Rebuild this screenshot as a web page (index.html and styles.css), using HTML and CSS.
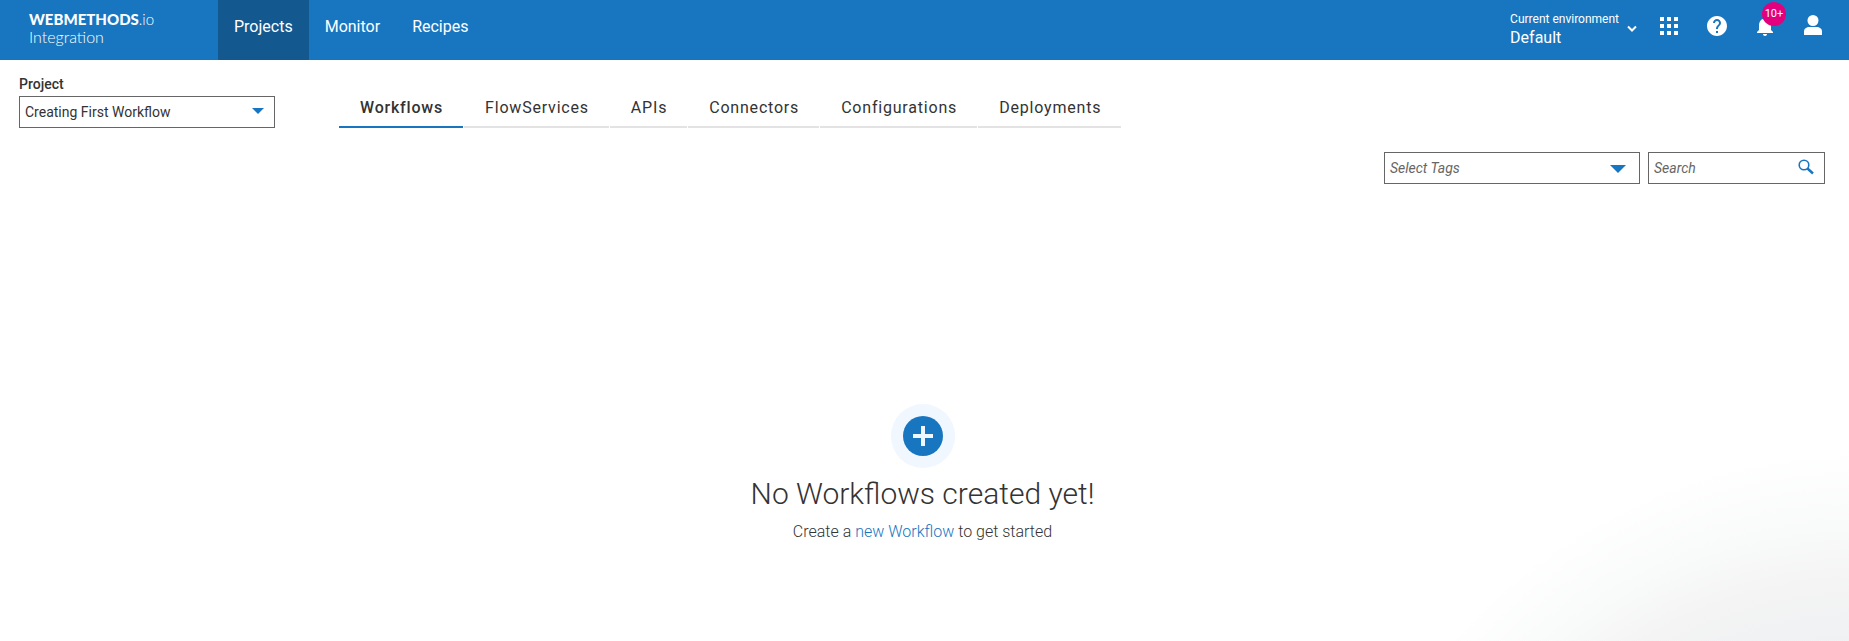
FILE: index.html
```html
<!DOCTYPE html>
<html lang="en">
<head>
<meta charset="utf-8">
<title>webMethods.io Integration</title>
<link rel="stylesheet" href="styles.css">
</head>
<body>
<header class="topbar">
  <a class="brand" href="#">
    <span class="brand-name"><b>WEBMETHODS</b>.io</span>
    <span class="brand-product">Integration</span>
  </a>
  <nav class="main-nav">
    <a class="nav-link active" href="#">Projects</a>
    <a class="nav-link" href="#">Monitor</a>
    <a class="nav-link" href="#">Recipes</a>
  </nav>
  <div class="tools">
    <button class="environment" type="button">
      <span class="env-text">
        <span class="env-label">Current environment</span>
        <span class="env-value">Default</span>
      </span>
      <svg class="chevron" viewBox="0 0 10 8" aria-hidden="true"><path d="M1 1.5 5 5.5 9 1.5" fill="none" stroke="currentColor" stroke-width="2"/></svg>
    </button>
    <button class="icon-button" type="button" aria-label="App switcher">
      <svg viewBox="0 0 24 24" aria-hidden="true"><path d="M3 3h4v4H3zM10 3h4v4h-4zM17 3h4v4h-4zM3 10h4v4H3zM10 10h4v4h-4zM17 10h4v4h-4zM3 17h4v4H3zM10 17h4v4h-4zM17 17h4v4h-4z"/></svg>
    </button>
    <button class="icon-button" type="button" aria-label="Help">
      <svg viewBox="0 0 24 24" aria-hidden="true"><path d="M12 2C6.480 2 2 6.480 2 12s4.480 10 10 10 10-4.480 10-10S17.520 2 12 2zm1 17h-2v-2h2v2zm2.070-7.750-.9.920C13.450 12.900 13 13.500 13 15h-2v-.5c0-1.100.45-2.100 1.170-2.830l1.240-1.260c.37-.36.590-.86.590-1.410 0-1.100-.9-2-2-2s-2 .9-2 2H8c0-2.210 1.790-4 4-4s4 1.790 4 4c0 .88-.36 1.680-.93 2.250z"/></svg>
    </button>
    <button class="icon-button" type="button" aria-label="Notifications">
      <svg viewBox="0 0 24 24" aria-hidden="true"><path d="M12 22c1.100 0 2-.9 2-2h-4c0 1.100.89 2 2 2zm6-6v-5c0-3.070-1.640-5.640-4.500-6.320V4c0-.83-.67-1.500-1.500-1.500s-1.500.67-1.500 1.500v.68C7.630 5.360 6 7.920 6 11v5l-2 2v1h16v-1l-2-2z"/></svg>
      <span class="badge">10+</span>
    </button>
    <button class="icon-button" type="button" aria-label="Account">
      <svg viewBox="0 0 24 24" aria-hidden="true"><circle cx="12" cy="6.500" r="5.500"/><path d="M3 21v-3.500C3 14.500 5.500 13 8.500 13h7c3 0 5.500 1.500 5.500 4.500V21z"/></svg>
    </button>
  </div>
</header>
<main class="page">
  <div class="project-row">
    <div class="project">
      <label class="project-label" for="project">Project</label>
      <div class="field">
        <select class="control" id="project"><option>Creating First Workflow</option></select>
        <svg class="arrow" viewBox="0 0 12 6" aria-hidden="true"><path d="M0 0h12L6 6z"/></svg>
      </div>
    </div>
    <nav class="tabs">
      <a class="tab selected" href="#">Workflows</a>
      <a class="tab" href="#">FlowServices</a>
      <a class="tab" href="#">APIs</a>
      <a class="tab" href="#">Connectors</a>
      <a class="tab" href="#">Configurations</a>
      <a class="tab" href="#">Deployments</a>
    </nav>
  </div>
  <div class="filters">
    <div class="field">
      <select class="control hint" aria-label="Tags"><option>Select Tags</option></select>
      <svg class="arrow large" viewBox="0 0 16 8" aria-hidden="true"><path d="M0 0h16L8 8z"/></svg>
    </div>
    <div class="field search">
      <input class="control hint" type="text" placeholder="Search" aria-label="Search">
      <svg class="magnifier" viewBox="0 0 16 16" aria-hidden="true"><circle cx="6" cy="6" r="4.800" fill="none" stroke="currentColor" stroke-width="1.600"/><path d="m9.500 9.500 5.500 5" stroke="currentColor" stroke-width="2.400"/></svg>
    </div>
  </div>
  <section class="empty">
    <button class="add" type="button" aria-label="New Workflow">
      <svg viewBox="0 0 40 40" aria-hidden="true"><circle cx="20" cy="20" r="20" fill="#1776bf"/><path d="M18 10h4v8h8v4h-8v8h-4v-8h-8v-4h8z" fill="#f0f7ff"/></svg>
    </button>
    <h1 class="empty-title">No Workflows created yet!</h1>
    <p class="empty-text">Create a <a href="#">new Workflow</a> to get started</p>
  </section>
</main>
</body>
</html>
```
FILE: styles.css
```css
* {
  box-sizing: border-box;
}

body {
  margin: 0;
  min-height: 100vh;
  display: flex;
  flex-direction: column;
  font-family: Roboto, "Liberation Sans", sans-serif;
  color: #333;
  background: radial-gradient(circle 540px at calc(100% + 10px) calc(100% + 350px), #ebeef3 0, #eff1f3 64%, #f4f4f4 76%, #f9fafa 86%, #fff 100%) #fff;
}

a {
  text-decoration: none;
}

button {
  padding: 0;
  border: 0;
  background: none;
  color: inherit;
  font: inherit;
  cursor: pointer;
}

svg {
  display: block;
}

.topbar {
  display: flex;
  height: 60px;
  padding: 0 24px 0 29px;
  background: #1776bf;
  color: #fff;
}

.brand {
  display: flex;
  flex-direction: column;
  width: 189px;
  padding-top: 11px;
  color: #fff;
  font-family: Lato, sans-serif;
  font-weight: 300;
  font-size: 15px;
  line-height: 17px;
}

.brand-name b {
  font-weight: 900;
}

.brand-product {
  font-size: 16px;
  line-height: 18px;
}

.main-nav {
  display: flex;
}

.nav-link {
  padding: 17px 16px 0;
  color: #fff;
  font-size: 16px;
  line-height: 20px;
}

.nav-link.active {
  background: #13588f;
}

.tools {
  display: flex;
  align-items: flex-start;
  gap: 24px;
  margin-left: auto;
}

.environment {
  display: flex;
  align-items: center;
  gap: 8px;
  padding-top: 10px;
  margin-right: -4px;
  text-align: left;
}

.env-text {
  display: flex;
  flex-direction: column;
}

.env-label {
  font-size: 12px;
  line-height: 18px;
}

.env-value {
  font-size: 16px;
  line-height: 20px;
}

.chevron {
  width: 10px;
  height: 8px;
}

.icon-button {
  position: relative;
  width: 24px;
  height: 24px;
  margin-top: 14px;
}

.icon-button svg {
  width: 24px;
  height: 24px;
  fill: #fff;
}

.badge {
  position: absolute;
  top: -12px;
  left: 9px;
  width: 24px;
  height: 24px;
  border-radius: 50%;
  background: #e2007f;
  font-size: 11px;
  line-height: 24px;
  text-align: center;
}

.page {
  flex: 1;
  display: flex;
  flex-direction: column;
  padding: 16px 24px 0 19px;
}

.project-row {
  display: flex;
  align-items: flex-end;
  gap: 64px;
}

.project-label {
  display: block;
  margin-bottom: 4px;
  font-size: 14px;
  font-weight: 500;
  line-height: 16px;
}

.field {
  position: relative;
  width: 256px;
}

.control {
  display: block;
  width: 100%;
  height: 32px;
  padding: 0 40px 0 5px;
  border: 1px solid #666;
  border-radius: 0;
  appearance: none;
  background: #fff;
  color: #333;
  font: 14px Roboto, "Liberation Sans", sans-serif;
}

.control.hint {
  color: #666;
  font-style: italic;
}

.control::placeholder {
  color: #666;
}

.arrow {
  position: absolute;
  top: 12px;
  right: 11px;
  width: 12px;
  height: 6px;
  fill: #1776bf;
  pointer-events: none;
}

.arrow.large {
  top: 13px;
  right: 14px;
  width: 16px;
  height: 8px;
}

.tabs {
  display: flex;
  gap: 1px;
}

.tab {
  padding: 0 20px 8px 21px;
  border-bottom: 2px solid #e3e3e3;
  color: #333;
  font-size: 16px;
  letter-spacing: 0.05em;
  line-height: 20px;
}

.tab.selected {
  border-color: #1776bf;
  font-weight: 500;
}

.filters {
  display: flex;
  justify-content: flex-end;
  gap: 8px;
  margin-top: 24px;
}

.field.search {
  width: 177px;
}

.magnifier {
  position: absolute;
  top: 7px;
  right: 11px;
  width: 16px;
  height: 16px;
  color: #1776bf;
}

.empty {
  flex: 1;
  display: flex;
  flex-direction: column;
  align-items: center;
  justify-content: flex-end;
  padding: 0 0 97px 1px;
}

.add {
  display: flex;
  align-items: center;
  justify-content: center;
  width: 64px;
  height: 64px;
  border-radius: 50%;
  background: #f0f7ff;
}

.add svg {
  width: 40px;
  height: 40px;
}

.empty-title {
  margin: 8px 0;
  font-size: 30px;
  font-weight: 300;
  line-height: 36px;
}

.empty-text {
  margin: 0;
  font-size: 16px;
  font-weight: 300;
  line-height: 24px;
}

.empty-text a {
  color: #1776bf;
}
```
